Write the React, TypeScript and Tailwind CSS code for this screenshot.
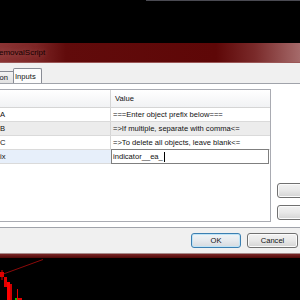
export default function App() {
  const rows = [
    { k: 'A', v: '===Enter object prefix below===', bg: 'bg-white' },
    { k: 'B', v: '=>If multiple, separate with comma<=', bg: 'bg-[#ececec]' },
    { k: 'C', v: '=>To delete all objects, leave blank<=', bg: 'bg-white' },
  ]

  return (
    <div className="w-[300px] h-[300px] overflow-hidden bg-black flex flex-col font-['Liberation_Sans',Arial,sans-serif] text-[7.6px] leading-[13px] text-[#111]">
      {/* chart above the dialog */}
      <div className="h-[43px] shrink-0 flex">
        <div className="w-[146px]" />
        <div className="flex-1 h-px bg-[#4a4a52]" />
      </div>

      {/* title bar */}
      <div className="h-[20px] shrink-0 flex items-center border-b border-[#9a5656] bg-[linear-gradient(to_right,#8a3434_0%,#7c2626_12%,#610b0b_22%,#5e0707_72%,#7a2a2a_85%,#a56a6a_100%)]">
        <span className="-ml-px text-[8px] leading-none text-[#160000] [text-shadow:0_0_6px_rgba(255,200,200,0.35)]">
          emovalScript
        </span>
      </div>

      {/* dialog body */}
      <div className="h-[190px] shrink-0 bg-[#f0f0f0] flex flex-col">
        {/* tabs */}
        <div className="h-[20px] flex items-end">
          <div className="w-[13px] h-[12px] border-t border-[#898c95] bg-gradient-to-b from-[#f3f3f3] to-[#e2e2e2] flex justify-end items-center pr-[5px]">
            on
          </div>
          <div className="w-[29px] h-[15px] border-t border-l border-r border-[#898c95] rounded-t-[2px] bg-[#fcfcfc] flex items-center pl-px">
            Inputs
          </div>
        </div>

        {/* tab panel */}
        <div className="h-[145px] border-t border-b border-[#a0a3aa] bg-white pt-[5px] flex items-start">
          {/* property grid */}
          <div className="w-[271px] h-[133px] shrink-0 border-t border-b border-r border-[#a9abb2] bg-white flex flex-col">
            <div className="h-[18px] flex border-b border-[#d5d5d5] bg-gradient-to-b from-white to-[#f1f2f4]">
              <div className="w-[111px] border-r border-[#d5d5d5]" />
              <div className="flex-1 pl-[4px] flex items-center">Value</div>
            </div>
            {rows.map((r) => (
              <div key={r.k} className={`h-[14px] flex border-b border-[#dadada] ${r.bg}`}>
                <div className="w-[111px] border-r border-[#d5d5d5]">{r.k}</div>
                <div className="flex-1 pl-[2px] whitespace-nowrap">{r.v}</div>
              </div>
            ))}
            <div className="flex items-start">
              <div className="w-[111px] h-[14px] border-b border-[#dadada] bg-[#e7effa]">ix</div>
              <div className="w-[158px] h-[15px] -mt-px border border-[#7f7f7f] bg-white pl-px flex items-center">
                <span>indicator__ea_</span>
                <span className="w-px h-[10px] bg-black ml-px" />
              </div>
            </div>
          </div>

          {/* side buttons (cut off) */}
          <div className="ml-[6px] mt-[94px] flex flex-col gap-[7px]">
            <div className="w-[50px] h-[15px] rounded-[3px] border border-[#707070] bg-gradient-to-b from-[#f2f2f2] via-[#e8e8e8] to-[#d4d4d4] shadow-[inset_0_0_0_1px_#fbfbfb]" />
            <div className="w-[50px] h-[15px] rounded-[3px] border border-[#707070] bg-gradient-to-b from-[#f2f2f2] via-[#e8e8e8] to-[#d4d4d4] shadow-[inset_0_0_0_1px_#fbfbfb]" />
          </div>
        </div>

        {/* OK / Cancel */}
        <div className="h-[25px] flex justify-end items-start pt-[5px] pr-[2px] gap-[6px]">
          <div className="w-[50px] h-[15px] rounded-[3px] border border-[#3c7fb1] bg-gradient-to-b from-[#f0f4f7] via-[#e6eaee] to-[#d6dadf] shadow-[inset_0_0_0_1px_#bfe4f7] flex items-center justify-center">
            OK
          </div>
          <div className="w-[51px] h-[15px] rounded-[3px] border border-[#707070] bg-gradient-to-b from-[#f2f2f2] via-[#e8e8e8] to-[#d4d4d4] shadow-[inset_0_0_0_1px_#fbfbfb] flex items-center justify-center">
            Cancel
          </div>
        </div>
      </div>

      {/* window frame bottom */}
      <div className="h-[5px] shrink-0 border-t border-[#a88c8c] bg-gradient-to-b from-[#7a2626] to-[#4e0808]" />

      {/* chart below */}
      <div className="h-[42px] shrink-0">
        <svg width="300" height="42" viewBox="0 0 300 42">
          <line x1="2" y1="16.5" x2="43" y2="1.5" stroke="#8b0a0a" strokeWidth="1" />
          <rect x="0" y="14" width="4" height="5" fill="#e00000" />
          <rect x="1.5" y="12" width="1" height="10" fill="#e00000" />
          <rect x="4" y="19" width="3" height="10" fill="#e00000" />
          <rect x="7" y="24" width="3" height="18" fill="#ff0000" />
          <rect x="10" y="26" width="2" height="16" fill="#d00000" />
          <rect x="17" y="31" width="1" height="11" fill="#e00000" />
          <rect x="15" y="40" width="2" height="2" fill="#00c000" />
          <rect x="18" y="40" width="4" height="2" fill="#e00000" />
        </svg>
      </div>
    </div>
  )
}
